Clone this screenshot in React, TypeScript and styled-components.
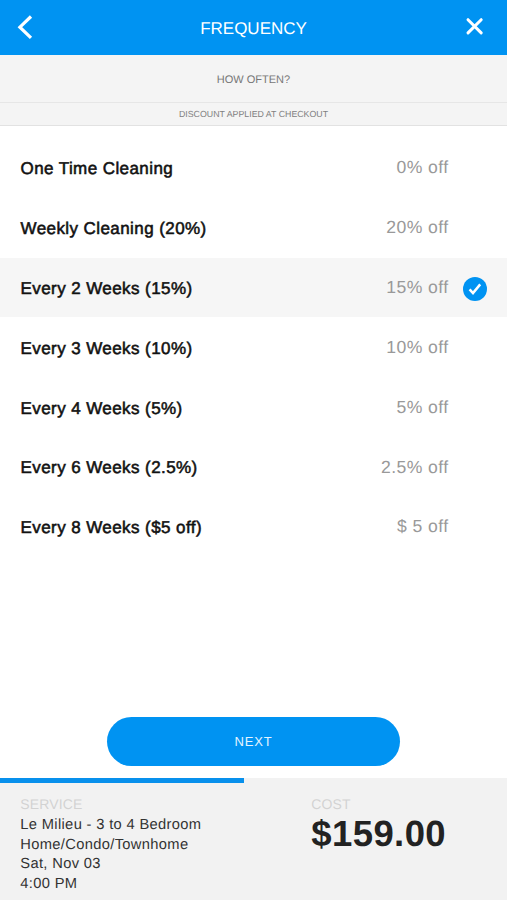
import React from "react";
import styled, { createGlobalStyle } from "styled-components";

const GlobalStyle = createGlobalStyle`
  *, *::before, *::after { box-sizing: border-box; }
  body { margin: 0; background: #fff; }
`;

const Screen = styled.main`
  display: flex;
  flex-direction: column;
  width: 507px;
  height: 900px;
  overflow: hidden;
  background: #fff;
  font-family: "Liberation Sans", Arial, sans-serif;
  text-rendering: geometricPrecision;
`;

const Header = styled.header`
  display: grid;
  grid-template-columns: 50px 1fr 50px;
  align-items: center;
  height: 54.5px;
  flex: none;
  background: #0093f2;
  color: #fff;
`;

const Title = styled.h1`
  margin: 0;
  padding-top: 3px;
  text-align: center;
  font-size: 17px;
  font-weight: 400;
  line-height: 20px;
`;

const IconButton = styled.button`
  display: flex;
  width: 50px;
  height: 54px;
  padding: 0;
  border: 0;
  background: none;
  color: inherit;
`;

const Question = styled.div`
  display: flex;
  flex: none;
  align-items: center;
  justify-content: center;
  height: 48.5px;
  padding-top: 3px;
  border-bottom: 1px solid #e6e6e6;
  background: #f4f4f4;
  color: #777;
  font-size: 11px;
`;

const Note = styled(Question)`
  height: 23px;
  padding-top: 0;
  border-color: #e2e2e2;
  color: #808080;
  font-size: 8.8px;
`;

const Options = styled.ul`
  flex: none;
  margin: 0;
  padding: 12px 0 0;
  list-style: none;
`;

const Option = styled.li<{ $selected: boolean }>`
  display: grid;
  grid-template-columns: 1fr auto 24px;
  align-items: center;
  height: 59.83px;
  padding: 1px 20px 0 20.5px;
  background: ${({ $selected }) => ($selected ? "#f6f6f6" : "#fff")};
  font-size: 17px;
  letter-spacing: 0.42px;
  line-height: 20px;
`;

const Label = styled.span`
  padding-top: 1.8px;
  color: #111;
  -webkit-text-stroke: 0.55px #111;
`;

const Discount = styled.span`
  padding-bottom: 2px;
  margin-right: 14.4px;
  color: #999;
  font-size: 17.6px;
`;

const CheckIcon = styled.svg`
  display: block;
  margin-top: 1px;
`;

const Action = styled.div`
  display: flex;
  flex: 1;
  align-items: flex-end;
  justify-content: center;
  padding-bottom: 12.5px;
`;

const NextButton = styled.button`
  width: 293px;
  height: 49px;
  padding: 0;
  border: 0;
  border-radius: 25px;
  background: #0093f2;
  color: #e4f4ff;
  font: 13px "Liberation Sans", Arial, sans-serif;
  letter-spacing: 0.8px;
`;

const Footer = styled.footer`
  flex: none;
  height: 122px;
  background: #f2f2f2;
`;

const Progress = styled.div`
  width: 244px;
  height: 5px;
  background: #0890ec;
`;

const Summary = styled.div`
  display: grid;
  grid-template-columns: 291px 1fr;
  padding: 11px 20px 0 20.3px;
`;

const Caption = styled.div`
  color: #d2d2d2;
  font-size: 14px;
  line-height: 20px;
  letter-spacing: 0.15px;
`;

const Details = styled.div`
  padding-top: 2.2px;
  color: #333;
  font-size: 14.7px;
  line-height: 19.5px;
  letter-spacing: 0.34px;
`;

const Price = styled.div`
  color: #222;
  font-size: 36.5px;
  font-weight: 700;
  line-height: 40px;
  letter-spacing: 0.4px;
`;

const options = [
  { label: "One Time Cleaning", discount: "0% off" },
  { label: "Weekly Cleaning (20%)", discount: "20% off" },
  { label: "Every 2 Weeks (15%)", discount: "15% off", selected: true },
  { label: "Every 3 Weeks (10%)", discount: "10% off" },
  { label: "Every 4 Weeks (5%)", discount: "5% off" },
  { label: "Every 6 Weeks (2.5%)", discount: "2.5% off" },
  { label: "Every 8 Weeks ($5 off)", discount: "$ 5 off" },
];

export default function App() {
  return (
    <>
      <GlobalStyle />
      <Screen>
        <Header>
          <IconButton aria-label="Back">
            <svg width="50" height="54" fill="none" stroke="currentColor" strokeWidth="3.2">
              <path d="M31 16.5 19.9 27.2 31 37.9" />
            </svg>
          </IconButton>
          <Title>FREQUENCY</Title>
          <IconButton aria-label="Close">
            <svg width="50" height="54" fill="none" stroke="currentColor" strokeWidth="3" strokeLinecap="round">
              <path d="m11 19.7 13.2 13.2M24.2 19.7 11 32.9" />
            </svg>
          </IconButton>
        </Header>
        <Question>HOW OFTEN?</Question>
        <Note>DISCOUNT APPLIED AT CHECKOUT</Note>
        <Options>
          {options.map(({ label, discount, selected = false }) => (
            <Option key={label} $selected={selected}>
              <Label>{label}</Label>
              <Discount>{discount}</Discount>
              {selected && (
                <CheckIcon width="24" height="24" viewBox="0 0 24 24">
                  <circle cx="12" cy="12" r="12" fill="#0093f2" />
                  <path d="m6.6 12.4 3.4 3.7L17.2 7.4" fill="none" stroke="#fff" strokeWidth="2.5" />
                </CheckIcon>
              )}
            </Option>
          ))}
        </Options>
        <Action>
          <NextButton>NEXT</NextButton>
        </Action>
        <Footer>
          <Progress />
          <Summary>
            <div>
              <Caption>SERVICE</Caption>
              <Details>
                Le Milieu - 3 to 4 Bedroom
                <br />
                Home/Condo/Townhome
                <br />
                Sat, Nov 03
                <br />
                4:00 PM
              </Details>
            </div>
            <div>
              <Caption>COST</Caption>
              <Price>$159.00</Price>
            </div>
          </Summary>
        </Footer>
      </Screen>
    </>
  );
}
